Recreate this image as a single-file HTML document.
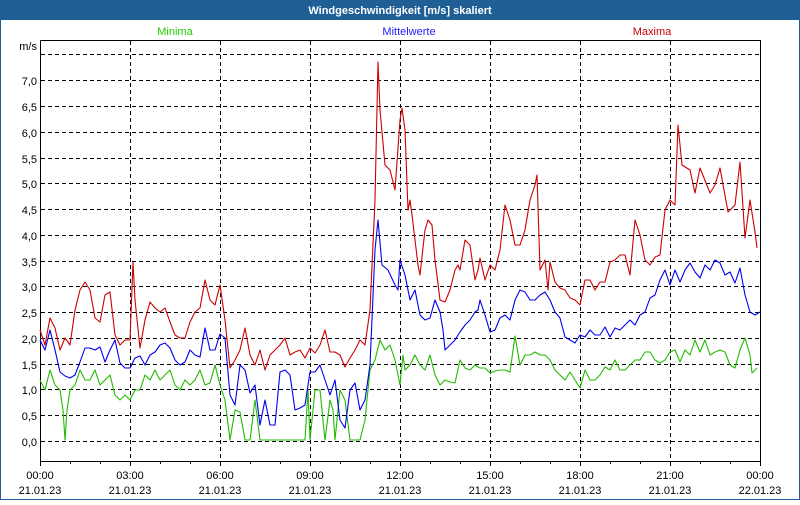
<!DOCTYPE html>
<html><head><meta charset="utf-8"><style>
html,body{margin:0;padding:0;background:#fff;}
body{width:800px;height:500px;overflow:hidden;font-family:"Liberation Sans",sans-serif;}
</style></head><body>
<svg width="800" height="500" xmlns="http://www.w3.org/2000/svg" font-family="Liberation Sans, sans-serif" font-size="11">
<rect x="0" y="0" width="800" height="500" fill="#fff"/>
<rect x="0.5" y="0.5" width="799" height="499" fill="none" stroke="#1f5f96"/>
<rect x="0" y="0" width="800" height="20" fill="#1f5f96"/>
<text x="400" y="14" fill="#fff" font-weight="bold" text-anchor="middle">Windgeschwindigkeit [m/s] skaliert</text>
<text x="175" y="35" fill="#22cc00" text-anchor="middle">Minima</text>
<text x="409" y="35" fill="#2020ff" text-anchor="middle">Mittelwerte</text>
<text x="652" y="35" fill="#cc0000" text-anchor="middle">Maxima</text>
<g stroke="#000" stroke-dasharray="4,3" stroke-width="1">
<line x1="41" x2="760" y1="54.5" y2="54.5"/><line x1="41" x2="760" y1="80.5" y2="80.5"/><line x1="41" x2="760" y1="106.5" y2="106.5"/><line x1="41" x2="760" y1="132.5" y2="132.5"/><line x1="41" x2="760" y1="158.5" y2="158.5"/><line x1="41" x2="760" y1="183.5" y2="183.5"/><line x1="41" x2="760" y1="209.5" y2="209.5"/><line x1="41" x2="760" y1="235.5" y2="235.5"/><line x1="41" x2="760" y1="261.5" y2="261.5"/><line x1="41" x2="760" y1="286.5" y2="286.5"/><line x1="41" x2="760" y1="312.5" y2="312.5"/><line x1="41" x2="760" y1="338.5" y2="338.5"/><line x1="41" x2="760" y1="364.5" y2="364.5"/><line x1="41" x2="760" y1="389.5" y2="389.5"/><line x1="41" x2="760" y1="415.5" y2="415.5"/><line x1="41" x2="760" y1="441.5" y2="441.5"/>
<line x1="130.5" x2="130.5" y1="41" y2="461"/><line x1="220.5" x2="220.5" y1="41" y2="461"/><line x1="310.5" x2="310.5" y1="41" y2="461"/><line x1="400.5" x2="400.5" y1="41" y2="461"/><line x1="490.5" x2="490.5" y1="41" y2="461"/><line x1="580.5" x2="580.5" y1="41" y2="461"/><line x1="670.5" x2="670.5" y1="41" y2="461"/>
</g>
<g stroke="#000" fill="none">
<polyline points="40.5,40.5 760.5,40.5 760.5,461.5 40.5,461.5 40.5,40.5"/>
<path d="M40.5 461v5M70.5 461v3M100.5 461v3M130.5 461v5M160.5 461v3M190.5 461v3M220.5 461v5M250.5 461v3M280.5 461v3M310.5 461v5M340.5 461v3M370.5 461v3M400.5 461v5M430.5 461v3M460.5 461v3M490.5 461v5M520.5 461v3M550.5 461v3M580.5 461v5M610.5 461v3M640.5 461v3M670.5 461v5M700.5 461v3M730.5 461v3M760.5 461v5"/>
</g>
<g fill="#000" text-anchor="end">
<text x="37" y="50">m/s</text>
<text x="37" y="85">7,0</text><text x="37" y="111">6,5</text><text x="37" y="137">6,0</text><text x="37" y="163">5,5</text><text x="37" y="188">5,0</text><text x="37" y="214">4,5</text><text x="37" y="240">4,0</text><text x="37" y="266">3,5</text><text x="37" y="291">3,0</text><text x="37" y="317">2,5</text><text x="37" y="343">2,0</text><text x="37" y="369">1,5</text><text x="37" y="394">1,0</text><text x="37" y="420">0,5</text><text x="37" y="446">0,0</text>
</g>
<g fill="#000" text-anchor="middle">
<text x="40" y="479">00:00</text><text x="40" y="494">21.01.23</text>
<text x="130" y="479">03:00</text><text x="130" y="494">21.01.23</text>
<text x="220" y="479">06:00</text><text x="220" y="494">21.01.23</text>
<text x="310" y="479">09:00</text><text x="310" y="494">21.01.23</text>
<text x="400" y="479">12:00</text><text x="400" y="494">21.01.23</text>
<text x="490" y="479">15:00</text><text x="490" y="494">21.01.23</text>
<text x="580" y="479">18:00</text><text x="580" y="494">21.01.23</text>
<text x="670" y="479">21:00</text><text x="670" y="494">21.01.23</text>
<text x="760" y="479">00:00</text><text x="760" y="494">22.01.23</text>
</g>
<g fill="none" stroke-width="1.1" stroke-linejoin="round">
<polyline stroke="#22bb00" points="40,380 45,390 50,370 55,385 60,390 63,410 65,440 67,410 70,390 75,385 80,370 85,380 90,380 95,370 100,385 105,380 110,375 115,395 120,400 125,395 130,400 135,390 140,390 145,375 150,380 155,370 160,380 165,375 170,370 175,385 180,390 185,380 190,385 195,380 200,370 205,385 210,383 215,365 220,385 225,400 230,440 235,410 240,412 245,440 250,440 255,400 260,440 265,440 305,440 308,390 310,440 315,390 320,390 325,440 330,400 333,410 335,440 340,390 345,400 350,440 360,440 365,420 370,370 375,360 380,340 385,350 390,345 395,360 400,385 403,355 405,370 410,365 415,355 420,365 425,370 430,355 435,375 440,385 445,380 450,382 455,383 460,360 465,368 470,370 475,365 480,368 485,368 490,373 495,371 500,370 505,370 510,372 515,336 520,365 525,355 530,355 535,352 540,355 545,355 550,360 555,370 560,375 565,380 570,372 575,380 580,388 585,370 590,380 595,380 600,375 605,367 610,370 615,360 620,370 625,370 630,365 635,360 640,360 645,352 650,352 655,360 660,363 665,360 670,352 675,350 680,362 685,350 690,355 695,340 700,352 705,340 710,355 715,352 720,350 725,352 730,365 735,368 740,350 745,338 750,355 752,373 757,368"/>
<polyline stroke="#0000ee" points="40,340 45,350 50,330 55,350 60,372 65,376 70,378 75,375 80,362 85,348 90,348 95,350 100,347 105,362 110,350 115,340 120,363 125,368 130,368 135,358 140,356 145,365 150,355 155,352 160,345 165,343 170,348 175,360 180,365 185,362 190,350 195,355 200,357 205,328 210,350 215,350 220,334 225,338 230,395 235,405 240,365 245,370 250,393 255,385 260,425 265,400 270,425 275,425 280,372 285,370 290,375 295,410 300,408 305,405 310,372 315,372 320,365 325,380 330,395 335,380 340,420 345,428 350,390 355,383 360,410 365,400 370,365 375,250 378,220 382,265 388,270 395,285 398,290 400,260 405,275 410,300 415,290 420,315 425,320 430,318 435,300 440,312 443,330 445,350 450,345 455,340 460,332 465,325 470,320 475,312 478,310 480,300 485,315 490,332 495,330 500,318 505,315 510,320 515,300 520,290 525,292 530,300 535,300 540,295 545,292 550,300 555,312 560,318 565,337 570,340 575,343 580,335 585,337 590,330 595,335 600,335 605,327 610,337 615,328 620,330 625,325 630,320 635,325 640,315 645,312 650,298 655,295 660,280 665,270 670,285 675,270 680,282 685,270 690,263 695,272 700,278 705,265 710,270 715,260 720,263 725,275 730,272 735,283 740,268 745,295 750,312 755,315 760,312"/>
<polyline stroke="#cc0000" points="40,330 45,345 50,318 55,328 60,350 65,338 70,345 75,310 80,290 85,282 90,290 95,318 100,322 105,295 110,292 115,335 120,345 125,340 130,340 133,262 135,300 140,348 145,320 150,302 155,308 160,312 165,308 170,322 175,335 180,338 185,338 190,322 195,312 200,308 205,280 210,300 215,305 220,285 225,320 230,368 235,360 240,350 245,328 250,355 255,365 260,350 265,370 270,355 275,350 280,345 285,338 290,355 295,352 300,350 305,358 310,348 315,353 320,345 325,330 330,352 335,352 340,355 345,367 350,358 355,350 360,340 365,345 370,310 375,200 378,62 380,110 385,165 390,170 395,190 400,120 402,108 405,130 408,210 410,200 412,215 415,240 418,265 420,275 425,230 428,220 432,225 435,260 440,300 445,302 450,290 455,270 458,265 460,270 465,240 470,245 475,280 478,270 480,258 485,280 490,265 495,270 500,250 505,205 510,220 515,245 520,245 525,230 530,200 535,185 537,175 540,270 545,260 548,290 550,262 555,282 560,288 565,290 570,298 575,300 580,305 585,280 590,280 595,290 600,282 605,282 610,262 615,260 620,255 625,255 630,275 635,220 640,235 645,260 650,265 655,257 660,255 665,210 670,200 675,205 678,125 682,165 690,170 695,193 700,168 710,193 715,185 720,168 728,212 735,205 740,162 745,238 750,200 755,232 757,248"/>
</g>
</svg>
</body></html>
